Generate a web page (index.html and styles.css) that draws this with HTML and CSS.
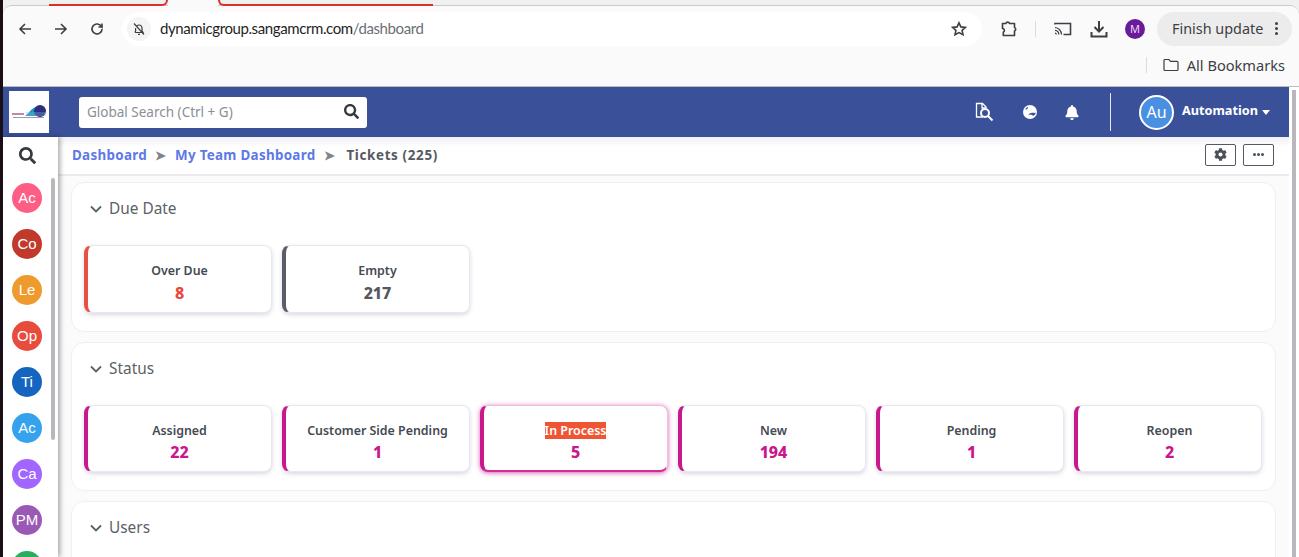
FILE: index.html
```html
<!DOCTYPE html>
<html>
  <head>
    <meta charset="UTF-8">
    <title>Tickets</title>
    <link rel="stylesheet" href="styles.css">
  </head>
  <body>
    <div class="window">
      <div class="tab-strip">
        <div class="tab-line tab-line-first"></div>
        <div class="tab-active"></div>
        <div class="tab-line tab-line-second"></div>
      </div>
      <div class="chrome">
        <div class="toolbar">
          <button class="nav-btn">
            <svg width="16" height="16" viewBox="0 0 16 16"><path d="M14 8H3M8 3 3 8l5 5" class="stroke"/></svg>
          </button>
          <button class="nav-btn">
            <svg width="16" height="16" viewBox="0 0 16 16"><path d="M2 8h11M8 3l5 5-5 5" class="stroke"/></svg>
          </button>
          <button class="nav-btn">
            <svg width="16" height="16" viewBox="0 0 16 16"><path d="M13 8a5 5 0 1 1-1.500-3.600L13 6V2.500M13 6H9.500" class="stroke"/></svg>
          </button>
          <div class="omnibox">
            <span class="site-icon">
              <svg width="14" height="14" viewBox="0 0 14 14"><path d="M3 10.500h8l-1-1.600V6a3 3 0 0 0-5-2.200M3.600 6v2.900L3 10.500M6 12.300h2M2 1.500l10 11" class="stroke-thin"/></svg>
            </span>
            <span class="url">dynamicgroup.sangamcrm.com<span class="url-path">/dashboard</span></span>
            <svg class="star" width="16" height="16" viewBox="0 0 16 16"><path d="m8 1.800 1.900 4.100 4.500.5-3.300 3 .9 4.400L8 11.600l-4 2.200.9-4.400-3.300-3 4.500-.5z" class="stroke"/></svg>
          </div>
          <svg class="tool-icon tool-ext" width="18" height="18" viewBox="0 0 18 18"><path d="M2.500 3.500h3.300a2 2 0 0 1 3.800 0h4.900v4.100a1.800 1.800 0 0 1 0 3.400v4.500H3.300v-3.200a2 2 0 0 0-.8-3.800z" class="stroke round"/></svg>
          <span class="tool-divider"></span>
          <svg class="tool-icon tool-cast" width="18" height="16" viewBox="0 0 18 16"><path d="M1 3.500V2.500h15.500v11h-7" class="stroke"/><path d="M1 6.500a7 7 0 0 1 6.500 7M1 9.300a4.200 4.200 0 0 1 3.800 4.200M1 12.200a1.400 1.400 0 0 1 1.300 1.300" class="stroke-thin"/></svg>
          <svg class="tool-icon tool-download" width="18" height="18" viewBox="0 0 18 18"><path d="M9 1v10M4.500 7 9 11.500 13.500 7M1.500 12v4.500h15V12" class="stroke-heavy"/></svg>
          <span class="profile">M</span>
          <div class="update-pill">
            <span>Finish update</span>
            <span class="kebab"><i></i><i></i><i></i></span>
          </div>
        </div>
        <div class="bookmarks">
          <span class="tool-divider"></span>
          <svg width="16" height="14" viewBox="0 0 16 14"><path d="M1 2.500a1 1 0 0 1 1-1h4l1.500 1.800H14a1 1 0 0 1 1 1v7.200a1 1 0 0 1-1 1H2a1 1 0 0 1-1-1z" class="stroke-thin"/></svg>
          <span>All Bookmarks</span>
        </div>
      </div>
      <div class="app">
        <div class="app-main">
          <header class="topbar">
            <div class="logo">
              <svg width="36" height="18" viewBox="0 0 36 18">
                <rect x="1" y="10" width="12" height="2" fill="#c08aa0"/>
                <path d="M14 13c2-1 4-4 6-6 2-2 4-3 6-3v9z" fill="#1f95c4"/>
                <circle cx="29" cy="8" r="6" fill="#2c2f80"/>
                <rect x="15" y="9" width="20" height="4" fill="#7fb4dc" opacity=".35"/>
                <rect x="2" y="14" width="31" height="1" fill="#9a9aa8"/>
              </svg>
            </div>
            <div class="global-search">
              <span class="placeholder">Global Search (Ctrl + G)</span>
              <svg width="15" height="15" viewBox="0 0 512 512"><path fill="#343a40" d="M505 442.700 405.300 343c-4.500-4.500-10.600-7-17-7H372c27.600-35.300 44-79.700 44-128C416 93.100 322.900 0 208 0S0 93.100 0 208s93.100 208 208 208c48.300 0 92.700-16.400 128-44v16.300c0 6.400 2.500 12.500 7 17l99.700 99.700c9.400 9.400 24.600 9.400 33.900 0l28.300-28.300c9.400-9.400 9.400-24.600.1-34zM208 336c-70.700 0-128-57.200-128-128 0-70.700 57.200-128 128-128 70.700 0 128 57.200 128 128 0 70.700-57.200 128-128 128z"/></svg>
            </div>
            <div class="topbar-icons">
              <svg width="20" height="20" viewBox="0 0 20 20"><path d="M9 15H2.500V1.500h6l3.500 3.500v1M8 1.500V6h4" class="stroke-white"/><circle cx="11" cy="11" r="4" class="stroke-white-bold"/><path d="m14 14 4.500 4.500" class="stroke-white-bold"/></svg>
              <svg width="14" height="14" viewBox="0 0 14 14"><circle cx="7" cy="7" r="7" fill="#fff"/><path d="M5.500 9.500c1-1.500 3-2.200 5-1.700.8.200 1.600.100 2.300-.2-.3 1.400-1 2.600-2.200 3.200-1.500-.2-2-1-3-1.200-1 .3-2.100.4-2.100-.1zM2 4.300C3 3 4 2.300 5 2c.2 1.300-.8 3-3 2.300z" fill="#3a5199"/></svg>
              <svg width="14" height="15" viewBox="0 0 448 512"><path fill="#fff" d="M224 512c35.300 0 64-28.700 64-64H160c0 35.300 28.700 64 64 64zm215.400-149.700c-19.300-20.800-55.500-52-55.500-154.300 0-77.700-54.500-139.900-127.900-155.200V32c0-17.700-14.300-32-32-32s-32 14.300-32 32v20.800C118.600 68.100 64.100 130.300 64.100 208c0 102.300-36.200 133.500-55.500 154.300-6 6.400-8.700 14.100-8.600 21.700.100 16.400 13 32 32.100 32h383.800c19.100 0 32-15.600 32.100-32 .1-7.600-2.600-15.300-8.600-21.700z"/></svg>
            </div>
            <span class="topbar-divider"></span>
            <div class="user">
              <span class="user-avatar">Au</span>
              <span class="user-name">Automation</span>
              <span class="caret"></span>
            </div>
          </header>
          <div class="workspace">
            <aside class="sidebar">
              <div class="side-search">
                <svg width="17" height="17" viewBox="0 0 512 512"><path fill="#343a40" d="M505 442.700 405.300 343c-4.500-4.500-10.600-7-17-7H372c27.600-35.300 44-79.700 44-128C416 93.100 322.900 0 208 0S0 93.100 0 208s93.100 208 208 208c48.300 0 92.700-16.400 128-44v16.300c0 6.400 2.500 12.500 7 17l99.700 99.700c9.400 9.400 24.600 9.400 33.900 0l28.300-28.300c9.400-9.400 9.400-24.600.1-34zM208 336c-70.700 0-128-57.200-128-128 0-70.700 57.200-128 128-128 70.700 0 128 57.200 128 128 0 70.700-57.200 128-128 128z"/></svg>
              </div>
              <div class="side-list">
                <div class="side-items">
                  <span class="side-item c-pink">Ac</span>
                  <span class="side-item c-brick">Co</span>
                  <span class="side-item c-orange">Le</span>
                  <span class="side-item c-red">Op</span>
                  <span class="side-item c-navy">Ti</span>
                  <span class="side-item c-sky">Ac</span>
                  <span class="side-item c-violet">Ca</span>
                  <span class="side-item c-purple">PM</span>
                  <span class="side-item c-green"></span>
                </div>
                <div class="side-scroll"></div>
              </div>
            </aside>
            <main class="content">
              <div class="crumbs">
                <a class="crumb">Dashboard</a>
                <span class="crumb-sep">&#10148;</span>
                <a class="crumb">My Team Dashboard</a>
                <span class="crumb-sep">&#10148;</span>
                <span class="crumb-current">Tickets (225)</span>
                <div class="crumb-actions">
                  <button class="small-btn">
                    <svg width="13" height="13" viewBox="0 0 512 512"><path fill="#495057" d="M487.400 315.700l-42.600-24.600c4.300-23.200 4.300-47 0-70.200l42.600-24.600c4.900-2.800 7.100-8.600 5.500-14-11.100-35.600-30-67.800-54.700-94.600-3.800-4.100-10-5.100-14.800-2.300L380.800 110c-17.900-15.400-38.500-27.300-60.800-35.100V25.800c0-5.600-3.900-10.500-9.400-11.700-36.700-8.200-74.300-7.800-109.200 0-5.500 1.200-9.400 6.100-9.400 11.700V75c-22.200 7.900-42.800 19.800-60.800 35.100L88.700 85.500c-4.900-2.800-11-1.900-14.800 2.300-24.700 26.700-43.600 58.900-54.700 94.600-1.700 5.400.6 11.200 5.500 14L67.300 221c-4.300 23.200-4.300 47 0 70.200l-42.600 24.600c-4.900 2.800-7.100 8.600-5.500 14 11.100 35.600 30 67.800 54.700 94.600 3.800 4.100 10 5.100 14.800 2.300l42.600-24.600c17.900 15.400 38.500 27.300 60.800 35.100v49.200c0 5.600 3.900 10.500 9.400 11.700 36.700 8.200 74.300 7.800 109.200 0 5.500-1.200 9.400-6.100 9.400-11.700v-49.200c22.200-7.900 42.800-19.800 60.800-35.100l42.600 24.600c4.900 2.800 11 1.900 14.800-2.300 24.700-26.700 43.600-58.900 54.700-94.600 1.500-5.500-.7-11.300-5.600-14.100zM256 336c-44.100 0-80-35.900-80-80s35.900-80 80-80 80 35.900 80 80-35.900 80-80 80z"/></svg>
                  </button>
                  <button class="small-btn dots"><i></i><i></i><i></i></button>
                </div>
              </div>
              <div class="sections">
                <section class="panel">
                  <h3 class="panel-title"><svg width="12" height="8" viewBox="0 0 12 8"><path d="m1 1.500 5 5 5-5" class="chev"/></svg>Due Date</h3>
                  <div class="card-row">
                    <div class="stat-card edge-red"><div class="stat-label">Over Due</div><div class="stat-value val-red">8</div></div>
                    <div class="stat-card edge-slate"><div class="stat-label">Empty</div><div class="stat-value val-slate">217</div></div>
                  </div>
                </section>
                <section class="panel panel-status">
                  <h3 class="panel-title"><svg width="12" height="8" viewBox="0 0 12 8"><path d="m1 1.500 5 5 5-5" class="chev"/></svg>Status</h3>
                  <div class="card-row tight">
                    <div class="stat-card edge-magenta"><div class="stat-label">Assigned</div><div class="stat-value val-magenta">22</div></div>
                    <div class="stat-card edge-magenta"><div class="stat-label">Customer Side Pending</div><div class="stat-value val-magenta">1</div></div>
                    <div class="stat-card edge-magenta active"><div class="stat-label"><span class="selected">In Process</span></div><div class="stat-value val-magenta">5</div></div>
                    <div class="stat-card edge-magenta"><div class="stat-label">New</div><div class="stat-value val-magenta">194</div></div>
                    <div class="stat-card edge-magenta"><div class="stat-label">Pending</div><div class="stat-value val-magenta">1</div></div>
                    <div class="stat-card edge-magenta"><div class="stat-label">Reopen</div><div class="stat-value val-magenta">2</div></div>
                  </div>
                </section>
                <section class="panel">
                  <h3 class="panel-title"><svg width="12" height="8" viewBox="0 0 12 8"><path d="m1 1.500 5 5 5-5" class="chev"/></svg>Users</h3>
                </section>
              </div>
            </main>
          </div>
        </div>
        <div class="page-scroll"><div class="page-thumb"></div></div>
      </div>
    </div>
  </body>
</html>
```

FILE: styles.css
```css
* {
  box-sizing: border-box;
}
html, body {
  margin: 0;
  height: 557px;
  overflow: hidden;
}
body {
  background: #1a0f16;
  padding-left: 3px;
  font-family: "Noto Sans", sans-serif;
}
button {
  border: none;
  background: none;
  padding: 0;
  font: inherit;
}

/* browser chrome */
.window {
  height: 557px;
  overflow: hidden;
  display: flex;
  flex-direction: column;
  background: #f0f0f1;
}
.tab-strip {
  height: 6px;
  flex-shrink: 0;
  display: flex;
  position: relative;
  z-index: 2;
}
.tab-line {
  height: 6px;
  border-bottom: 2px solid #d9302c;
}
.tab-line-first {
  width: 119px;
  margin-left: 46px;
  border-radius: 0 0 7px 0;
  border-right: 2px solid #d9302c;
}
.tab-active {
  width: 50px;
  height: 6px;
  background: #fafafa;
}
.tab-line-second {
  width: 215px;
  border-radius: 0 0 0 7px;
  border-left: 2px solid #d9302c;
}
.chrome {
  height: 82px;
  margin-top: -1px;
  flex-shrink: 0;
  background: #fafafa;
  border-top: 1px solid #c9c9cb;
  border-bottom: 1px solid #bcbcbe;
  border-radius: 9px 9px 0 0;
}
.toolbar {
  height: 40px;
  padding: 5px 7px 0 4px;
  display: flex;
  align-items: center;
}
.nav-btn {
  width: 36px;
  height: 34px;
  display: flex;
  align-items: center;
  justify-content: center;
}
.stroke, .stroke-thin, .stroke-heavy {
  fill: none;
  stroke: #3c3f43;
  stroke-width: 1.6;
}
.stroke-thin {
  stroke-width: 1.2;
}
.stroke-heavy {
  stroke-width: 2;
}
.round {
  stroke-linejoin: round;
}
.omnibox {
  width: 860px;
  height: 34px;
  margin-left: 7px;
  padding: 0 15px 0 5px;
  display: flex;
  align-items: center;
  background: #fff;
  border-radius: 17px;
}
.site-icon {
  width: 24px;
  height: 24px;
  background: #f4f4f5;
  border-radius: 50%;
  display: flex;
  align-items: center;
  justify-content: center;
  margin-right: 9px;
}
.url {
  font-family: Lato, sans-serif;
  font-size: 15px;
  letter-spacing: -.4px;
  padding-bottom: 2px;
  color: #1f1f1f;
  flex: 1;
}
.url-path {
  color: #6b6f75;
}
.tool-icon {
  margin-left: 18px;
  flex-shrink: 0;
}
.tool-divider {
  width: 1px;
  height: 16px;
  background: #dcdcde;
  margin-left: 17px;
}
.profile {
  width: 20px;
  height: 20px;
  margin-left: 17px;
  flex-shrink: 0;
  border-radius: 50%;
  background: #6a1b9a;
  color: #e8d8f0;
  font-size: 11px;
  display: flex;
  align-items: center;
  justify-content: center;
}
.update-pill {
  height: 34px;
  width: 135px;
  flex-shrink: 0;
  margin-left: 12px;
  padding: 0 14px 0 15px;
  background: #ececed;
  border-radius: 17px;
  display: flex;
  align-items: center;
  justify-content: space-between;
  font-size: 14.4px;
  color: #3c3f43;
}
.kebab {
  display: flex;
  flex-direction: column;
  gap: 2px;
}
.kebab i {
  width: 3px;
  height: 3px;
  border-radius: 50%;
  background: #3c3f43;
}
.bookmarks {
  height: 38px;
  padding-right: 14px;
  display: flex;
  align-items: center;
  justify-content: flex-end;
  gap: 8px;
  font-size: 14.6px;
  color: #3c3f43;
}
.bookmarks .tool-divider {
  margin: 0 8px 0 0;
}

/* app */
.app {
  flex: 1;
  min-height: 0;
  display: flex;
  background: #fff;
}
.app-main {
  width: 1286px;
  display: flex;
  flex-direction: column;
  flex-shrink: 0;
}
.topbar {
  height: 50px;
  padding-left: 6px;
  background: #3a5199;
  display: flex;
  align-items: center;
  flex-shrink: 0;
}
.logo {
  width: 40px;
  height: 42px;
  background: #fff;
  display: flex;
  align-items: center;
  justify-content: center;
}
.global-search {
  width: 288px;
  height: 31px;
  margin-left: 30px;
  padding: 0 8px 1px;
  background: #fff;
  border-radius: 3px;
  display: flex;
  align-items: center;
  justify-content: space-between;
  font-size: 13.5px;
  color: #8a8f96;
}
.topbar-icons {
  margin-left: 607px;
  width: 110px;
  display: flex;
  align-items: center;
  gap: 28.500px;
}
.stroke-white {
  fill: none;
  stroke: #fff;
  stroke-width: 1.3;
}
.stroke-white-bold {
  fill: none;
  stroke: #fff;
  stroke-width: 2;
}
.topbar-divider {
  width: 1px;
  height: 38px;
  background: #e6e9f2;
  margin-left: 26px;
}
.user {
  margin-left: 28px;
  display: flex;
  align-items: center;
  color: #fff;
}
.user-avatar {
  width: 35px;
  height: 35px;
  border: 2px solid #fff;
  border-radius: 50%;
  background: #4a90e2;
  display: flex;
  align-items: center;
  justify-content: center;
  font-size: 16px;
}
.user-name {
  margin: 0 0 5px 8px;
  font-size: 12.7px;
  font-weight: 700;
}
.caret {
  margin-left: 4px;
  border: 4.500px solid transparent;
  border-top: 5px solid #fff;
  border-bottom: 0;
}

.workspace {
  flex: 1;
  min-height: 0;
  display: flex;
}
.sidebar {
  width: 55px;
  flex-shrink: 0;
  background: #fff;
  box-shadow: 2px 0 5px rgba(0, 0, 0, .35);
  position: relative;
  z-index: 1;
}
.side-search {
  height: 36px;
  padding-right: 6px;
  display: flex;
  align-items: center;
  justify-content: center;
}
.side-list {
  display: flex;
  padding-top: 10px;
}
.side-items {
  width: 48px;
  display: flex;
  flex-direction: column;
  align-items: center;
  gap: 16px;
}
.side-item {
  width: 30px;
  height: 30px;
  padding-bottom: 1px;
  flex-shrink: 0;
  border-radius: 50%;
  display: flex;
  align-items: center;
  justify-content: center;
  color: #fff;
  font-family: "Liberation Sans", sans-serif;
  font-size: 15px;
}
.c-pink { background: #ff5e84; }
.c-brick { background: #c0392b; }
.c-orange { background: #ef9a2d; }
.c-red { background: #e74c3c; }
.c-navy { background: #1565c0; }
.c-sky { background: #35a2ee; }
.c-violet { background: #a066ff; }
.c-purple { background: #9b59b6; }
.c-green { background: #27ae60; }
.side-scroll {
  width: 4px;
  height: 262px;
  margin-top: -5px;
  border-radius: 2px;
  background: #b9b9bd;
  flex-shrink: 0;
}

.content {
  flex: 1;
  min-width: 0;
  background: #fbfbfc;
}
.crumbs {
  height: 39px;
  padding: 0 15px 2px 14px;
  background: linear-gradient(#f1f1f3, #fff 10px);
  border-bottom: 2px solid #ebebef;
  display: flex;
  align-items: center;
  font-size: 13.4px;
  font-weight: 700;
  letter-spacing: .3px;
}
.crumb {
  color: #5c79e6;
}
.crumb-sep {
  color: #808489;
  margin: 0 8.500px;
  font-size: 13px;
  letter-spacing: 0;
}
.crumb-current {
  color: #555a60;
  margin-left: 3px;
  letter-spacing: .65px;
}
.crumb-actions {
  margin-left: auto;
  display: flex;
  gap: 7px;
}
.small-btn {
  width: 31px;
  height: 22px;
  background: #fff;
  border: 1px solid #555a60;
  border-radius: 2px;
  display: flex;
  align-items: center;
  justify-content: center;
}
.dots {
  gap: 1px;
}
.dots i {
  width: 3px;
  height: 3px;
  border-radius: 50%;
  background: #495057;
}
.sections {
  padding: 6px 13px 0 13px;
  display: flex;
  flex-direction: column;
  gap: 10px;
}
.panel {
  background: #fff;
  border: 1px solid #f0f0f3;
  border-radius: 13px;
  padding: 0 12px;
  height: 150px;
}
.panel-status {
  height: 149px;
}
.panel-title {
  margin: 0;
  height: 52px;
  padding: 0 0 1px 6px;
  display: flex;
  align-items: center;
  gap: 7px;
  font-size: 15.4px;
  font-weight: 400;
  color: #5b5f66;
}
.chev {
  fill: none;
  stroke: #5b5f66;
  stroke-width: 1.8;
}
.card-row {
  margin-top: 10px;
  display: flex;
  gap: 10px;
}
.card-row.tight .stat-card {
  height: 67px;
}
.card-row.tight .stat-value {
  line-height: 24px;
}
.stat-card {
  width: 188px;
  height: 68px;
  padding-top: 16px;
  background: #fff;
  border: 1px solid #e9e8f2;
  border-left-width: 4px;
  border-radius: 8px;
  box-shadow: 0 2px 4px rgba(70, 70, 110, .2);
  text-align: center;
}
.edge-red { border-left-color: #e8513f; }
.edge-slate { border-left-color: #5a5c68; }
.edge-magenta { border-left-color: #c9188d; }
.stat-card.active {
  border-color: #f0bfe0;
  border-left-color: #c9188d;
  border-bottom: 2px solid #d02c9a;
  box-shadow: 0 1px 5px rgba(201, 24, 141, .7);
}
.stat-label {
  font-size: 12.400px;
  font-weight: 600;
  line-height: 18px;
  color: #454a52;
}
.selected {
  background: #ee5533;
  color: #fff;
}
.stat-value {
  font-size: 16px;
  font-weight: 800;
  line-height: 26px;
}
.val-red { color: #e8483a; }
.val-slate { color: #55585f; }
.val-magenta { color: #c9188d; }
.page-scroll {
  flex: 1;
  display: flex;
  padding: 3px 3px 0 3px;
  background: #fff;
}
.page-thumb {
  width: 4px;
  background: #b9b9bd;
}
```
